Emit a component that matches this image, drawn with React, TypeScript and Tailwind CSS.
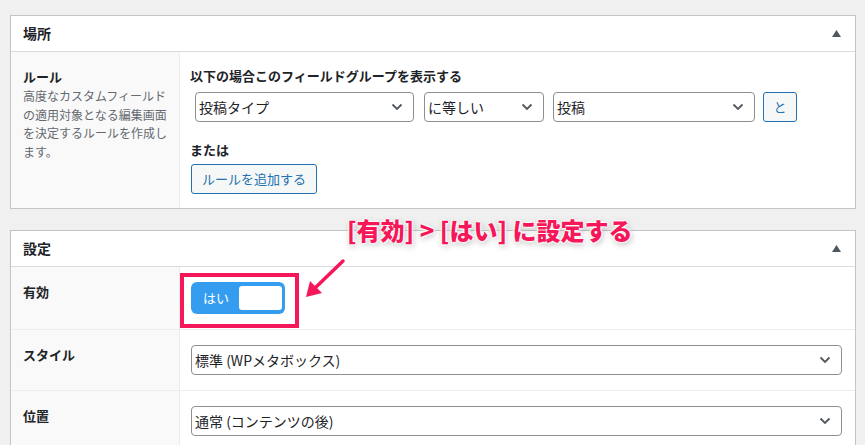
import React from 'react';

const Chevron: React.FC = () => (
    <svg width="12" height="8" viewBox="0 0 12 8" className="shrink-0">
        <path d="M1.5 1.5 L6 6 L10.5 1.5" fill="none" stroke="#50575e" strokeWidth="1.8" />
    </svg>
);

const Select: React.FC<{ label: string; className: string }> = ({ label, className }) => (
    <div className={`h-[30px] border border-[#8c8f94] rounded-[4px] bg-white flex items-center justify-between pl-[3px] pr-[10px] text-[14px] text-[#1d2327] ${className}`}>
        <span className="whitespace-nowrap">{label}</span>
        <Chevron />
    </div>
);

const Triangle: React.FC = () => (
    <svg width="9" height="7" viewBox="0 0 9 7">
        <path d="M4.5 0 L9 7 L0 7 Z" fill="#50575e" />
    </svg>
);

const PanelHeader: React.FC<{ title: string }> = ({ title }) => (
    <div className="h-[36px] border-b border-[#dcdcde] flex items-center justify-between pl-[12px] pr-[14px]">
        <span className="text-[14px] font-semibold text-[#1d2327]">{title}</span>
        <Triangle />
    </div>
);

const SettingRow: React.FC<{ label: string; last?: boolean; children: React.ReactNode }> = ({ label, last, children }) => (
    <div className={`flex ${last ? '' : 'border-b border-[#ededed]'}`}>
        <div className="w-[169px] shrink-0 bg-[#f9f9f9] border-r border-[#ededed] pl-[12px] pt-[15px] text-[13px] font-semibold text-[#1d2327] leading-[20px]">
            {label}
        </div>
        <div className="flex-1 pl-[11px] pr-[12px] pt-[15px] pb-[15px]">{children}</div>
    </div>
);

export default function App() {
    return (
        <div className="relative w-[865px] h-[445px] overflow-hidden bg-[#f0f0f1] pl-[10px] pt-[15px] font-['Noto_Sans_CJK_JP','Noto_Sans',sans-serif]">
            <div className="w-[846px] bg-white border border-[#c3c4c7]">
                <PanelHeader title="場所" />
                <div className="flex">
                    <div className="w-[169px] shrink-0 bg-[#f9f9f9] border-r border-[#ededed] pl-[12px] pr-[10px] pt-[15px]">
                        <div className="text-[13px] font-semibold text-[#1d2327] leading-[20px]">ルール</div>
                        <div className="text-[12px] text-[#646970] leading-[18.5px]">
                            高度なカスタムフィールドの適用対象となる編集画面を決定するルールを作成します。
                        </div>
                    </div>
                    <div className="flex-1 pl-[10px] pt-[14px] pb-[14px]">
                        <div className="text-[13px] font-semibold text-[#1d2327] leading-[20px]">以下の場合このフィールドグループを表示する</div>
                        <div className="flex items-center mt-[6px] ml-[5px]">
                            <Select label="投稿タイプ" className="w-[219px]" />
                            <Select label="に等しい" className="w-[120px] ml-[10px]" />
                            <Select label="投稿" className="w-[202px] ml-[9px]" />
                            <button className="ml-[8px] w-[34px] h-[30px] rounded-[3px] border border-[#2271b1] bg-[#f6f7f7] text-[#2271b1] text-[13px]">と</button>
                        </div>
                        <div className="mt-[18px] text-[13px] font-semibold text-[#1d2327] leading-[20px]">または</div>
                        <button className="mt-[4px] ml-px h-[30px] px-[10px] rounded-[3px] border border-[#2271b1] bg-[#f6f7f7] text-[#2271b1] text-[13px]">ルールを追加する</button>
                    </div>
                </div>
            </div>

            <div className="mt-[21px] w-[846px] bg-white border border-[#c3c4c7]">
                <PanelHeader title="設定" />
                <SettingRow label="有効">
                    <div className="w-[94px] h-[32px] rounded-[6px] bg-[#359df0] flex items-center justify-between pl-[12px] pr-[3px]">
                        <span className="text-[13px] text-white">はい</span>
                        <div className="w-[43px] h-[24px] rounded-[3px] bg-white" />
                    </div>
                </SettingRow>
                <SettingRow label="スタイル">
                    <Select label="標準 (WPメタボックス)" className="w-[651px]" />
                </SettingRow>
                <SettingRow label="位置" last>
                    <Select label="通常 (コンテンツの後)" className="w-[651px]" />
                </SettingRow>
            </div>

            {/* annotation overlay */}
            <div className="absolute left-[180px] top-[273px] w-[119px] h-[55px] border-[4px] border-[#f5175a]" />
            <svg className="absolute left-[300px] top-[255px]" width="50" height="48" viewBox="0 0 50 48">
                <line x1="43" y1="6" x2="14" y2="34" stroke="#f5175a" strokeWidth="3.5" strokeLinecap="round" />
                <path d="M6 42 L10 26 L22 38 Z" fill="#f5175a" />
            </svg>
            <div className="absolute left-[347px] top-[213px] text-[24px] font-black text-[#f5175a] leading-[34px] whitespace-nowrap [text-shadow:0_0_2px_#fff,0_0_2px_#fff,0_0_3px_#fff,0_0_4px_#fff,1px_2px_6px_rgba(0,0,0,0.35)]">
                [有効] &gt; [はい] に設定する
            </div>
        </div>
    );
}
